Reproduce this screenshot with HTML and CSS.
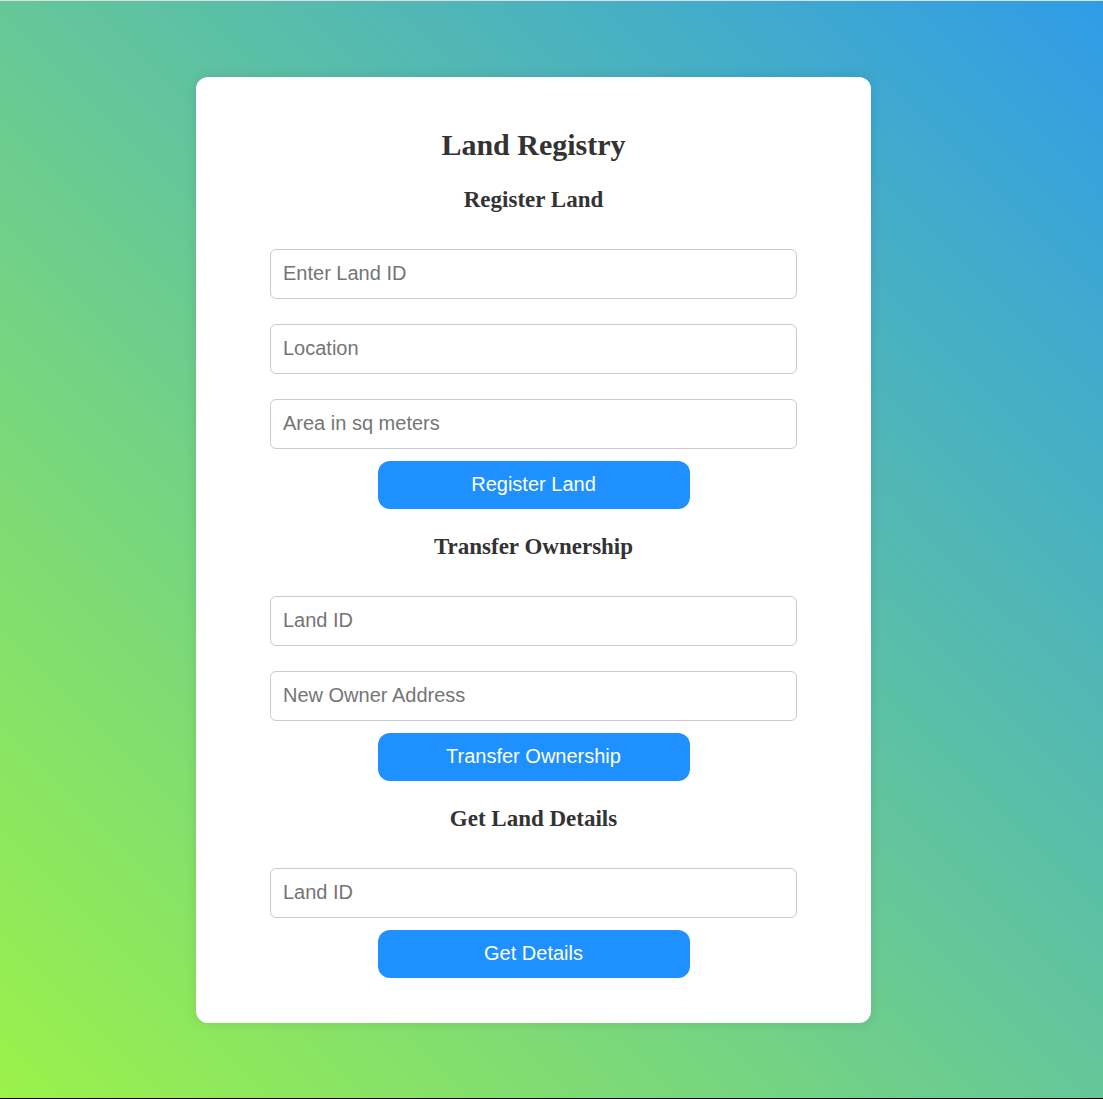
FILE: index.html
```html
<!DOCTYPE html>
<html lang="en">
<head>
  <meta charset="utf-8">
  <meta name="viewport" content="width=device-width, initial-scale=1">
  <title>Land Registry</title>
  <link rel="stylesheet" href="styles.css">
</head>
<body>
  <main class="page">
    <div class="card">
      <h1 class="title">Land Registry</h1>
      <form class="section">
        <h2 class="heading">Register Land</h2>
        <div class="fields">
          <input class="field" type="text" placeholder="Enter Land ID" aria-label="Land ID to register">
          <input class="field" type="text" placeholder="Location" aria-label="Location">
          <input class="field" type="text" placeholder="Area in sq meters" aria-label="Area in sq meters">
        </div>
        <button class="button" type="button">Register Land</button>
      </form>
      <form class="section">
        <h2 class="heading">Transfer Ownership</h2>
        <div class="fields">
          <input class="field" type="text" placeholder="Land ID" aria-label="Land ID to transfer">
          <input class="field" type="text" placeholder="New Owner Address" aria-label="New owner address">
        </div>
        <button class="button" type="button">Transfer Ownership</button>
      </form>
      <form class="section">
        <h2 class="heading">Get Land Details</h2>
        <div class="fields">
          <input class="field" type="text" placeholder="Land ID" aria-label="Land ID to look up">
        </div>
        <button class="button" type="button">Get Details</button>
      </form>
    </div>
  </main>
</body>
</html>
```
FILE: styles.css
```css
* {
  box-sizing: border-box;
}

body {
  margin: 0;
  font-family: "Liberation Serif", "Times New Roman", serif;
  color: #333;
}

.page {
  display: flex;
  align-items: center;
  justify-content: center;
  min-height: 100vh;
  padding: 24px 36px 24px 0;
  border-top: 1px solid #dedede;
  border-bottom: 1px solid #000;
  background: linear-gradient(45deg, #9bf24a, #2f9ce7) border-box;
}

.card {
  display: flex;
  flex-direction: column;
  gap: 25px;
  width: 100%;
  max-width: 675px;
  padding: 50px 74px 45px;
  border-radius: 12px;
  background: #fff;
  box-shadow: 0 0 12px rgba(0, 0, 0, 0.1);
}

.title,
.heading {
  margin: 0;
  font-weight: bold;
  text-align: center;
}

.title {
  font-size: 30px;
  line-height: 35px;
}

.heading {
  margin-bottom: 36px;
  font-size: 23px;
  line-height: 26px;
}

.section {
  display: flex;
  flex-direction: column;
}

.fields {
  display: flex;
  flex-direction: column;
  gap: 25px;
  margin-bottom: 12px;
}

.field {
  width: 100%;
  height: 50px;
  padding: 0 12px;
  border: 1px solid #ccc;
  border-radius: 6px;
  background: #fff;
  font-family: "Liberation Sans", Arial, sans-serif;
  font-size: 20px;
}

.field::placeholder {
  color: #757575;
}

.button {
  align-self: center;
  width: 100%;
  max-width: 312px;
  height: 48px;
  padding: 0;
  border: 0;
  border-radius: 12px;
  background: #1e90ff;
  color: #fff;
  font-family: "Liberation Sans", Arial, sans-serif;
  font-size: 20px;
  cursor: pointer;
}
```
